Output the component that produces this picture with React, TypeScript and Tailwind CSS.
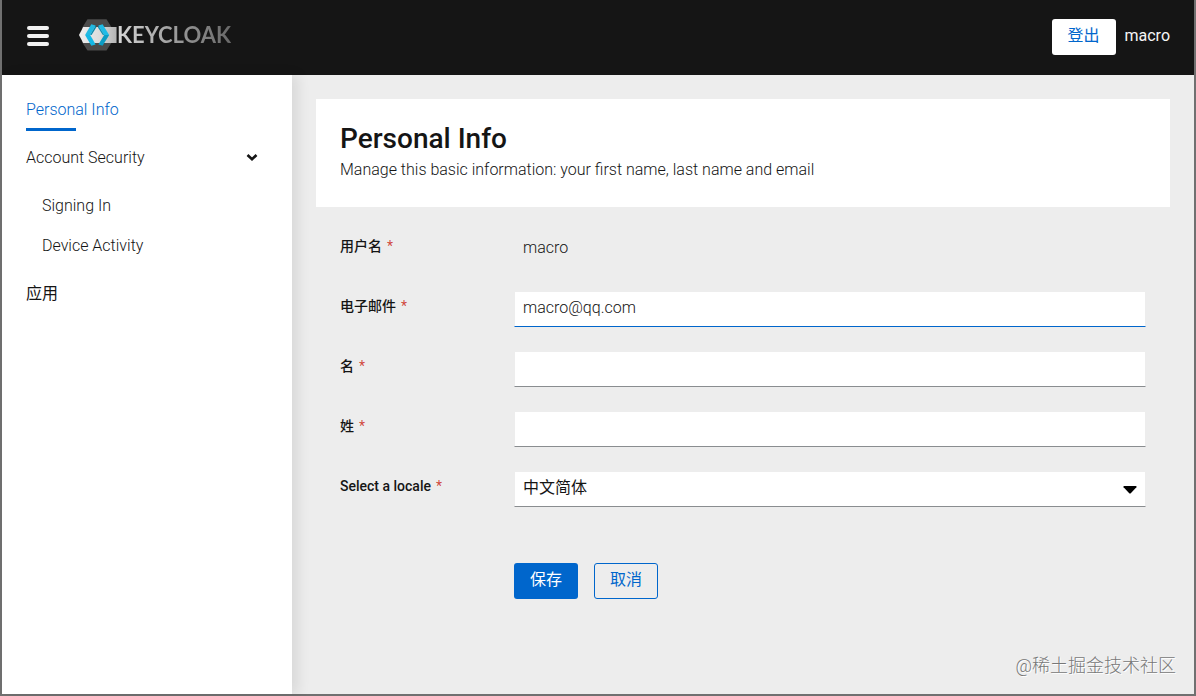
import { useState } from "react";
import type { ReactNode } from "react";

function KeycloakLogo() {
  return (
    <a href="#home" aria-label="Keycloak" className="flex items-center">
      <svg width="38" height="32" viewBox="0 0 38 32" aria-hidden="true">
        <defs>
          <linearGradient id="band" x1="0" x2="1" y1="0" y2="0">
            <stop offset="0" stopColor="#eeeeee" />
            <stop offset="0.55" stopColor="#dcdcdc" />
            <stop offset="1" stopColor="#b4b4b4" />
          </linearGradient>
        </defs>
        <path d="M8.5 0.2H27.5L33 9V23L27.5 31.5H8.5L3 23V9Z" fill="#4b4b4b" />
        <path d="M4.2 8H37V24H4.2L0 16Z" fill="url(#band)" />
        <path d="M37.5 8V24" stroke="#6a6a6a" strokeWidth="1" />
        <path d="M12.3 5.2L16.6 6.6L11.2 16H6.1Z" fill="#22b9e2" />
        <path d="M6.1 16H11.2L16.6 25.4L12.3 26.8Z" fill="#14b8e6" />
        <path d="M16.6 6.6L17.2 8.6L12.6 16.1L11.2 16Z" fill="#0789ac" />
        <path d="M19.4 6.6L23.6 5.2L30.2 16H25.2Z" fill="#1fbbe6" />
        <path d="M30.2 16L23.6 26.8L19.4 25.4L25.2 16Z" fill="#0b9cc4" />
        <path d="M19.4 6.6L25.2 16L23.8 16L19 8.4Z" fill="#0b93b8" />
      </svg>
      <span className="bg-linear-to-r from-[#d6d6d6] to-[#686868] bg-clip-text font-['Lato',sans-serif] text-[22px] leading-7 font-bold text-transparent">
        KEYCLOAK
      </span>
    </a>
  );
}

function Row({ id, label, children }: { id: string; label: string; children: ReactNode }) {
  return (
    <div className="grid grid-cols-[150px_minmax(0,1fr)] gap-6">
      <label htmlFor={id} className="flex gap-[5px] pt-[5px] text-sm leading-[21px] font-medium">
        {label}
        <span className="font-normal text-[#c9190b]/80">*</span>
      </label>
      {children}
    </div>
  );
}

const field =
  "h-9 w-full appearance-none rounded-none border border-[#ededed] bg-white px-2 pb-[3px] text-base outline-none";

export default function App() {
  const [email, setEmail] = useState("macro@qq.com");
  const [open, setOpen] = useState(true);

  return (
    <div className="flex min-h-screen flex-col border-x-2 border-b-2 border-[#707070] bg-[#ededed] font-['Roboto','Noto_Sans_CJK_SC',sans-serif] text-base leading-6 font-light text-[#151515]">
      <header className="flex h-[75px] items-center justify-between bg-[#151515] pr-6 pl-[25px]">
        <div className="flex items-center gap-[30px] pb-[6px]">
          <button type="button" aria-label="Menu" className="flex w-[22px] flex-col gap-1 pt-[2px]">
            <span className="h-1 rounded-xs bg-[#f0f0f0]" />
            <span className="h-1 rounded-xs bg-[#f0f0f0]" />
            <span className="h-1 rounded-xs bg-[#f0f0f0]" />
          </button>
          <KeycloakLogo />
        </div>
        <div className="flex items-center gap-[9px] pb-[2px]">
          <button type="button" className="h-9 w-16 rounded-[3px] bg-white pb-[2px] font-normal text-[#06c]">
            登出
          </button>
          <span className="pb-[2px] font-normal text-[#f5f5f5]">macro</span>
        </div>
      </header>

      <div className="flex grow">
        <nav className="w-[290px] shrink-0 bg-white px-6 pt-4 shadow-[6px_0_12px_0_rgba(3,3,3,0.09)]">
          <ul>
            <li className="pt-[7px] pb-[15px]">
              <a href="#personal" className="inline-block text-[#06c]">
                Personal Info
              </a>
              <div className="mt-[6px] h-[3px] w-[50px] bg-[#06c]" />
            </li>
            <li>
              <button
                type="button"
                aria-expanded={open}
                onClick={() => setOpen(!open)}
                className="flex w-full items-center justify-between pr-[10px]"
              >
                Account Security
                <svg width="12" height="8" viewBox="0 0 12 8" fill="none" stroke="#151515" strokeWidth="2.6" aria-hidden="true">
                  <path d="M1.5 1L6 5.3L10.5 1" />
                </svg>
              </button>
              {open && (
                <ul className="flex flex-col gap-4 pt-6 pl-4">
                  <li>
                    <a href="#signing-in">Signing In</a>
                  </li>
                  <li>
                    <a href="#devices">Device Activity</a>
                  </li>
                </ul>
              )}
            </li>
            <li className="pt-6 font-normal">
              <a href="#applications">应用</a>
            </li>
          </ul>
        </nav>

        <main className="flex min-w-0 grow flex-col p-6 pb-4">
          <section className="bg-white px-6 pt-[22px] pb-[25px]">
            <h1 className="text-[28px] leading-9 font-medium">Personal Info</h1>
            <p className="pt-px">Manage this basic information: your first name, last name and email</p>
          </section>

          <form className="flex flex-col gap-6 p-6" onSubmit={(e) => e.preventDefault()}>
            <Row id="username" label="用户名">
              <output id="username" className="h-9 px-[9px] pt-[5px]">
                macro
              </output>
            </Row>
            <Row id="email" label="电子邮件">
              <input
                id="email"
                type="email"
                value={email}
                onChange={(e) => setEmail(e.target.value)}
                className={`${field} border-b-[#06c]`}
              />
            </Row>
            <Row id="first-name" label="名">
              <input id="first-name" type="text" className={`${field} border-b-[#8a8d90]`} />
            </Row>
            <Row id="last-name" label="姓">
              <input id="last-name" type="text" className={`${field} border-b-[#8a8d90]`} />
            </Row>
            <Row id="locale" label="Select a locale">
              <div className="relative">
                <select id="locale" className={`${field} border-b-[#8a8d90] font-normal`}>
                  <option>中文简体</option>
                </select>
                <svg width="14" height="8" viewBox="0 0 14 8" className="pointer-events-none absolute top-[15px] right-[9px]" aria-hidden="true">
                  <path d="M1 0H13Q14 0.3 13.4 1.2L8 7Q7 8 6 7L0.6 1.2Q0 0.3 1 0Z" />
                </svg>
              </div>
            </Row>
            <div className="flex gap-4 pt-8 pl-[174px]">
              <button type="submit" className="h-9 w-16 rounded-[3px] bg-[#06c] pb-[3px] font-normal text-white">
                保存
              </button>
              <button type="button" className="h-9 w-16 rounded-[3px] border border-[#06c] pb-[3px] font-normal text-[#06c]">
                取消
              </button>
            </div>
          </form>

          <p className="-mr-[6px] mt-auto self-end text-lg leading-6 text-[#777] [text-shadow:1px_1px_0_#fff]">
            @稀土掘金技术社区
          </p>
        </main>
      </div>
    </div>
  );
}
